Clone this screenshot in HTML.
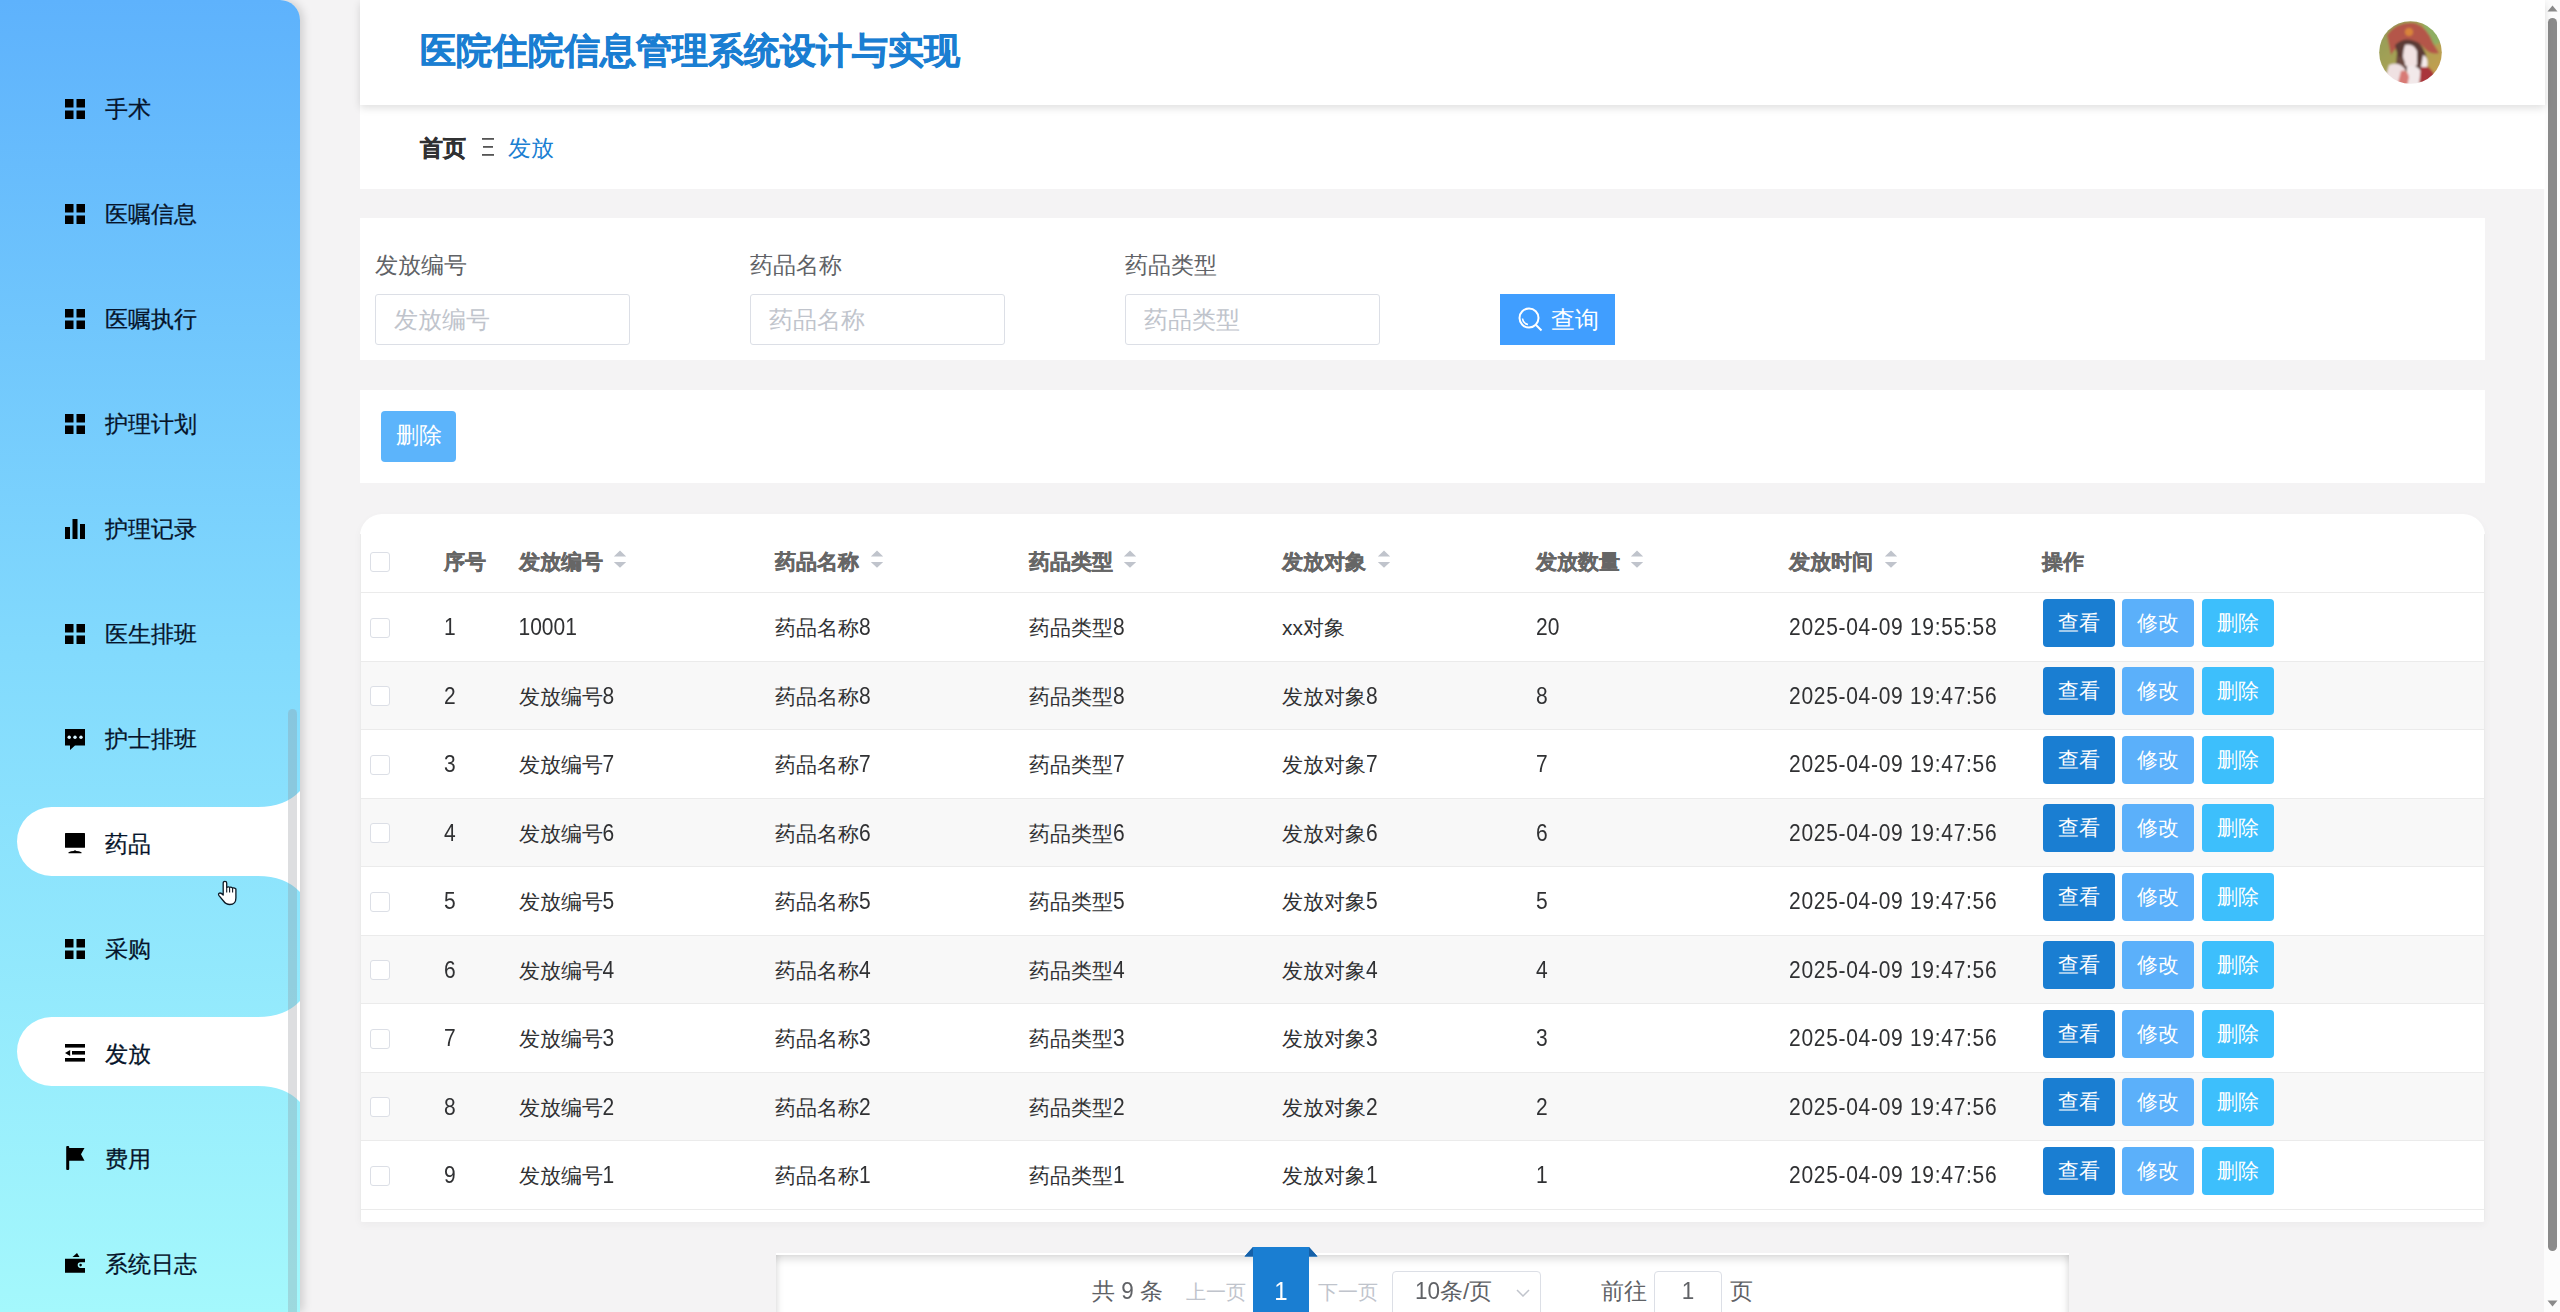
<!DOCTYPE html><html><head><meta charset="utf-8"><style>
*{box-sizing:border-box;margin:0;padding:0}
html,body{width:2560px;height:1312px;overflow:hidden;background:#f4f3f4;font-family:"Liberation Sans",sans-serif}
.t{position:absolute;white-space:nowrap}
#side{position:absolute;left:0;top:0;width:300px;height:1312px;border-top-right-radius:20px;background:linear-gradient(180deg,#5eb2fc 0%,#82dafd 50%,#a4f8fc 100%);box-shadow:3px 0 10px rgba(0,0,0,.16);overflow:hidden;z-index:5}
.mi{position:absolute;left:105px;font-size:22.5px;line-height:30px;color:#06142a;-webkit-text-stroke:0.25px #06142a;white-space:nowrap}
.ic{position:absolute;left:65px;width:20px;height:20px}
#hdr{position:absolute;left:360px;top:0;width:2185px;height:105px;background:#fff;box-shadow:0 3px 8px rgba(0,0,0,.13);z-index:3}
#bc{position:absolute;left:360px;top:105px;width:2185px;height:84px;background:#fff;z-index:2}
.box{position:absolute;left:360px;width:2125px;background:#fff}
.lbl{font-size:22.5px;line-height:30px;color:#606266}
.inp{position:absolute;width:255px;height:51px;border:1.5px solid #dcdfe6;border-radius:3px;background:#fff}
.ph{font-size:24px;line-height:30px;color:#c0c4cc}
.th{font-size:21px;line-height:28px;font-weight:bold;color:#666;-webkit-text-stroke:0.35px #666}
.td{font-size:21px;line-height:28px;color:#303133}
.cb{position:absolute;left:9.5px;width:20px;height:20px;border:1.5px solid #dcdfe6;border-radius:3px;background:#fff}
.btn{position:absolute;width:72px;height:48px;border-radius:4px;color:#fff;font-size:21px;line-height:48px;text-align:center}
.sort{position:absolute;width:14px;height:18px}
</style></head><body>
<div id="side">
<svg class="t" style="left:0;top:790.5px" width="300" height="101" viewBox="0 0 300 101"><path fill="#fff" d="M51.5 16H300V85H51.5A34.5 34.5 0 0 1 51.5 16Z"/><path fill="#fff" d="M258 16Q285 16 300 0V16Z"/><path fill="#fff" d="M258 85Q285 85 300 101V85Z"/></svg>
<svg class="t" style="left:0;top:1000.5px" width="300" height="101" viewBox="0 0 300 101"><path fill="#fff" d="M51.5 16H300V85H51.5A34.5 34.5 0 0 1 51.5 16Z"/><path fill="#fff" d="M258 16Q285 16 300 0V16Z"/><path fill="#fff" d="M258 85Q285 85 300 101V85Z"/></svg>
<svg class="ic" style="top:99px" viewBox="0 0 20 20" overflow="visible" fill="#000"><rect x="0" y="0" width="8.5" height="8.5"/><rect x="11.5" y="0" width="8.5" height="8.5"/><rect x="0" y="11.5" width="8.5" height="8.5"/><rect x="11.5" y="11.5" width="8.5" height="8.5"/></svg>
<div class="mi" style="top:95px">手术</div>
<svg class="ic" style="top:204px" viewBox="0 0 20 20" overflow="visible" fill="#000"><rect x="0" y="0" width="8.5" height="8.5"/><rect x="11.5" y="0" width="8.5" height="8.5"/><rect x="0" y="11.5" width="8.5" height="8.5"/><rect x="11.5" y="11.5" width="8.5" height="8.5"/></svg>
<div class="mi" style="top:200px">医嘱信息</div>
<svg class="ic" style="top:309px" viewBox="0 0 20 20" overflow="visible" fill="#000"><rect x="0" y="0" width="8.5" height="8.5"/><rect x="11.5" y="0" width="8.5" height="8.5"/><rect x="0" y="11.5" width="8.5" height="8.5"/><rect x="11.5" y="11.5" width="8.5" height="8.5"/></svg>
<div class="mi" style="top:305px">医嘱执行</div>
<svg class="ic" style="top:414px" viewBox="0 0 20 20" overflow="visible" fill="#000"><rect x="0" y="0" width="8.5" height="8.5"/><rect x="11.5" y="0" width="8.5" height="8.5"/><rect x="0" y="11.5" width="8.5" height="8.5"/><rect x="11.5" y="11.5" width="8.5" height="8.5"/></svg>
<div class="mi" style="top:410px">护理计划</div>
<svg class="ic" style="top:519px" viewBox="0 0 20 20" overflow="visible" fill="#000"><rect x="0" y="8" width="5" height="12"/><rect x="7.5" y="0" width="5" height="20"/><rect x="15" y="5" width="5" height="15"/></svg>
<div class="mi" style="top:515px">护理记录</div>
<svg class="ic" style="top:624px" viewBox="0 0 20 20" overflow="visible" fill="#000"><rect x="0" y="0" width="8.5" height="8.5"/><rect x="11.5" y="0" width="8.5" height="8.5"/><rect x="0" y="11.5" width="8.5" height="8.5"/><rect x="11.5" y="11.5" width="8.5" height="8.5"/></svg>
<div class="mi" style="top:620px">医生排班</div>
<svg class="ic" style="top:729px" viewBox="0 0 20 20" overflow="visible" fill="#000"><path d="M0 0H20V16.5H10L5 21V16.5H0Z"/><circle cx="4.2" cy="8.3" r="1.7" fill="#d8f4ff"/><circle cx="10" cy="8.3" r="1.7" fill="#d8f4ff"/><circle cx="16" cy="8.3" r="1.7" fill="#d8f4ff"/></svg>
<div class="mi" style="top:725px">护士排班</div>
<svg class="ic" style="top:834px" viewBox="0 0 20 20" overflow="visible" fill="#000"><rect x="0" y="-1" width="20" height="14.8" rx="0.5"/><path d="M3.5 18.2Q6 17 8.6 17Q10 15.6 11.4 17Q14 17 16.5 18.2V19.3H3.5Z"/></svg>
<div class="mi" style="top:830px">药品</div>
<svg class="ic" style="top:939px" viewBox="0 0 20 20" overflow="visible" fill="#000"><rect x="0" y="0" width="8.5" height="8.5"/><rect x="11.5" y="0" width="8.5" height="8.5"/><rect x="0" y="11.5" width="8.5" height="8.5"/><rect x="11.5" y="11.5" width="8.5" height="8.5"/></svg>
<div class="mi" style="top:935px">采购</div>
<svg class="ic" style="top:1044px" viewBox="0 0 20 20" overflow="visible" fill="#000"><rect x="0" y="0" width="20" height="3.6"/><rect x="7" y="7" width="13" height="3.6"/><path d="M0 9L5.2 6V12Z"/><rect x="0" y="14" width="20" height="3.6"/></svg>
<div class="mi" style="top:1040px">发放</div>
<svg class="ic" style="top:1149px" viewBox="0 0 20 20" overflow="visible" fill="#000"><rect x="1.2" y="-3" width="3" height="24" rx="1"/><path d="M4 -1H19.5L16 5.2L19.5 11.7H4Z"/></svg>
<div class="mi" style="top:1145px">费用</div>
<svg class="ic" style="top:1254px" viewBox="0 0 20 20" overflow="visible" fill="#000"><path d="M7.5 3L12 -1L14.5 3Z"/><path d="M0 4.8H20V8.3H15.5A2.8 2.8 0 0 0 15.5 13.9H20V18.7H0Z"/><circle cx="15.6" cy="11.1" r="1.3"/></svg>
<div class="mi" style="top:1250px">系统日志</div>
<div class="t" style="left:288px;top:709px;width:9px;height:640px;border-radius:5px;background:rgba(144,147,153,.3)"></div>
<svg class="t" style="left:215px;top:878px" width="25" height="30" viewBox="0 0 25 30"><path d="M8.2 17V5Q8.2 3.3 9.95 3.3Q11.7 3.3 11.7 5V9.5Q13.1 8.4 14.6 9.3Q16.1 8.7 17.6 9.9Q19.3 9.4 20.9 11V20Q20.9 26.5 14.8 26.5Q11 26.5 8.5 23L3.8 17.3Q3 15.8 4.5 15.1Q6 14.6 8.2 17Z" fill="#fff" stroke="#0d1a26" stroke-width="1.3" stroke-linejoin="round"/><path d="M11.7 9.5V14.5M14.6 9.4V14.5M17.6 10V14.5" stroke="#0d1a26" stroke-width="1.1"/></svg>
</div>
<div id="hdr">
<div class="t" style="left:60px;top:29px;font-size:36px;line-height:44px;font-weight:bold;color:#1a7ed2;-webkit-text-stroke:0.6px #1a7ed2">医院住院信息管理系统设计与实现</div>
<svg class="t" style="left:2019px;top:21px" width="63" height="63" viewBox="0 0 63 63">
<defs><clipPath id="cc"><circle cx="31.5" cy="31.5" r="31.3"/></clipPath>
<filter id="bl" x="-10%" y="-10%" width="120%" height="120%"><feGaussianBlur stdDeviation="1.1"/></filter>
<linearGradient id="ag" x1="0" y1="0" x2="1" y2="1"><stop offset="0" stop-color="#8d9c5c"/><stop offset=".5" stop-color="#a9a253"/><stop offset="1" stop-color="#cf9c4e"/></linearGradient></defs>
<g clip-path="url(#cc)"><g filter="url(#bl)">
<rect x="-3" y="-3" width="69" height="69" fill="url(#ag)"/>
<path d="M44 -2L60 4L64 20L52 26L46 12Z" fill="#8fae62"/>
<path d="M8 14Q18 0 36 2Q48 6 54 22L60 32Q52 34 46 28Q38 18 26 22Q16 26 12 34Z" fill="#b4574a"/>
<circle cx="30" cy="11" r="4" fill="#d9843a"/>
<path d="M16 24Q26 14 40 22Q48 30 48 44Q44 52 36 50L24 50Q16 44 18 32Z" fill="#5b3b36"/>
<path d="M26 24Q34 22 38 30L38 44Q32 50 26 44Q22 36 26 24Z" fill="#f1e2e2"/>
<path d="M18 36Q24 34 26 42L24 50L16 48Z" fill="#6b4a40"/>
<path d="M10 44Q20 40 26 48L30 66H4Z" fill="#efe1e2"/>
<path d="M28 46Q36 42 42 50L40 66H28Z" fill="#f2e9ea"/>
<path d="M22 50Q28 48 30 56L28 66H18Z" fill="#d87a74"/>
<path d="M42 44Q52 44 56 56L52 66H40Z" fill="#a9363a"/>
<path d="M44 34Q50 36 48 46L42 46Z" fill="#f4eaea"/>
</g></g></svg>
</div>
<div id="bc">
<div class="t" style="left:60px;top:28.5px;font-size:22.5px;line-height:30px;font-weight:bold;color:#303133;-webkit-text-stroke:0.4px #303133">首页</div>
<svg class="t" style="left:122px;top:33px" width="12" height="18" viewBox="0 0 12 18"><rect x="0" y="0" width="12" height="1.8" fill="#555"/><rect x="1" y="8" width="10" height="1.8" fill="#555"/><rect x="0" y="16" width="12" height="1.8" fill="#555"/></svg>
<div class="t" style="left:148px;top:28.5px;font-size:22.5px;line-height:30px;color:#1a7ed2">发放</div>
</div>
<div class="box" style="top:218px;height:142px">
<div class="t lbl" style="left:15px;top:33px">发放编号</div>
<div class="inp" style="left:15px;top:76px"><div class="t ph" style="left:17.5px;top:10px">发放编号</div></div>
<div class="t lbl" style="left:390px;top:33px">药品名称</div>
<div class="inp" style="left:390px;top:76px"><div class="t ph" style="left:17.5px;top:10px">药品名称</div></div>
<div class="t lbl" style="left:765px;top:33px">药品类型</div>
<div class="inp" style="left:765px;top:76px"><div class="t ph" style="left:17.5px;top:10px">药品类型</div></div>
<div class="t" style="left:1140px;top:76px;width:115px;height:51px;background:#409eff"><svg class="t" style="left:17px;top:12px" width="28" height="28" viewBox="0 0 28 28"><circle cx="12" cy="12" r="9.5" fill="none" stroke="#fff" stroke-width="2"/><path d="M19 19L24.5 24.5" stroke="#fff" stroke-width="2"/><path d="M5.5 12.5A7 7 0 0 0 11 18.5" fill="none" stroke="#fff" stroke-width="1.5"/></svg><div class="t" style="left:51px;top:11px;font-size:24px;line-height:30px;color:#fff">查询</div></div>
</div>
<div class="box" style="top:390px;height:93px">
<div class="t" style="left:21px;top:21px;width:75px;height:51px;border-radius:4px;background:#5cb4fb;color:#fff;font-size:22.5px;line-height:49px;text-align:center">删除</div>
</div>
<div class="box" style="top:514px;height:708px;border-radius:22px 22px 3px 3px;box-shadow:0 3px 8px rgba(0,0,0,.035)"><div class="t" style="left:0;top:0;width:2125px;height:708px;border-radius:22px 22px 3px 3px;overflow:hidden">
<div class="cb" style="top:37.5px"></div>
<div class="t th" style="left:84px;top:34px">序号</div>
<div class="t th" style="left:158.5px;top:34px">发放编号</div>
<svg class="sort" style="left:253px;top:36px" viewBox="0 0 14 18"><path d="M7 0.5L13.2 6.6H0.8Z M0.8 12.1H13.2L7 17.8Z" fill="#c0c4cc"/></svg>
<div class="t th" style="left:415px;top:34px">药品名称</div>
<svg class="sort" style="left:510px;top:36px" viewBox="0 0 14 18"><path d="M7 0.5L13.2 6.6H0.8Z M0.8 12.1H13.2L7 17.8Z" fill="#c0c4cc"/></svg>
<div class="t th" style="left:669px;top:34px">药品类型</div>
<svg class="sort" style="left:763px;top:36px" viewBox="0 0 14 18"><path d="M7 0.5L13.2 6.6H0.8Z M0.8 12.1H13.2L7 17.8Z" fill="#c0c4cc"/></svg>
<div class="t th" style="left:922px;top:34px">发放对象</div>
<svg class="sort" style="left:1017px;top:36px" viewBox="0 0 14 18"><path d="M7 0.5L13.2 6.6H0.8Z M0.8 12.1H13.2L7 17.8Z" fill="#c0c4cc"/></svg>
<div class="t th" style="left:1176px;top:34px">发放数量</div>
<svg class="sort" style="left:1270px;top:36px" viewBox="0 0 14 18"><path d="M7 0.5L13.2 6.6H0.8Z M0.8 12.1H13.2L7 17.8Z" fill="#c0c4cc"/></svg>
<div class="t th" style="left:1429px;top:34px">发放时间</div>
<svg class="sort" style="left:1524px;top:36px" viewBox="0 0 14 18"><path d="M7 0.5L13.2 6.6H0.8Z M0.8 12.1H13.2L7 17.8Z" fill="#c0c4cc"/></svg>
<div class="t th" style="left:1682px;top:34px">操作</div>
<div class="t" style="left:0;top:78px;width:2125px;height:1px;background:#ebebeb"></div>
<div class="t" style="left:0;top:79px;width:2125px;height:68px;background:#fff"></div>
<div class="cb" style="top:103.5px"></div>
<div class="t td" style="left:84px;top:100.0px"><span style="display:inline-block;transform:scaleY(1.12);transform-origin:0 21.28px">1</span></div>
<div class="t td" style="left:158.5px;top:100.0px"><span style="display:inline-block;transform:scaleY(1.12);transform-origin:0 21.28px">10001</span></div>
<div class="t td" style="left:415px;top:100.0px">药品名称<span style="display:inline-block;transform:scaleY(1.12);transform-origin:0 21.28px">8</span></div>
<div class="t td" style="left:669px;top:100.0px">药品类型<span style="display:inline-block;transform:scaleY(1.12);transform-origin:0 21.28px">8</span></div>
<div class="t td" style="left:922px;top:100.0px">xx对象</div>
<div class="t td" style="left:1176px;top:100.0px"><span style="display:inline-block;transform:scaleY(1.12);transform-origin:0 21.28px">20</span></div>
<div class="t td" style="left:1429px;top:100.0px"><span style="display:inline-block;transform:scaleY(1.12);transform-origin:0 21.28px;letter-spacing:0.7px">2025-04-09 19:55:58</span></div>
<div class="btn" style="left:1683px;top:84.5px;background:#1a7ed2">查看</div>
<div class="btn" style="left:1762px;top:84.5px;background:#5bb0fa">修改</div>
<div class="btn" style="left:1842px;top:84.5px;background:#3dbffc">删除</div>
<div class="t" style="left:0;top:147px;width:2125px;height:1px;background:#ebebeb"></div>
<div class="t" style="left:0;top:148px;width:2125px;height:67px;background:#f8f8f8"></div>
<div class="cb" style="top:172.0px"></div>
<div class="t td" style="left:84px;top:168.5px"><span style="display:inline-block;transform:scaleY(1.12);transform-origin:0 21.28px">2</span></div>
<div class="t td" style="left:158.5px;top:168.5px">发放编号<span style="display:inline-block;transform:scaleY(1.12);transform-origin:0 21.28px">8</span></div>
<div class="t td" style="left:415px;top:168.5px">药品名称<span style="display:inline-block;transform:scaleY(1.12);transform-origin:0 21.28px">8</span></div>
<div class="t td" style="left:669px;top:168.5px">药品类型<span style="display:inline-block;transform:scaleY(1.12);transform-origin:0 21.28px">8</span></div>
<div class="t td" style="left:922px;top:168.5px">发放对象<span style="display:inline-block;transform:scaleY(1.12);transform-origin:0 21.28px">8</span></div>
<div class="t td" style="left:1176px;top:168.5px"><span style="display:inline-block;transform:scaleY(1.12);transform-origin:0 21.28px">8</span></div>
<div class="t td" style="left:1429px;top:168.5px"><span style="display:inline-block;transform:scaleY(1.12);transform-origin:0 21.28px;letter-spacing:0.7px">2025-04-09 19:47:56</span></div>
<div class="btn" style="left:1683px;top:153.0px;background:#1a7ed2">查看</div>
<div class="btn" style="left:1762px;top:153.0px;background:#5bb0fa">修改</div>
<div class="btn" style="left:1842px;top:153.0px;background:#3dbffc">删除</div>
<div class="t" style="left:0;top:215px;width:2125px;height:1px;background:#ebebeb"></div>
<div class="t" style="left:0;top:216px;width:2125px;height:68px;background:#fff"></div>
<div class="cb" style="top:240.5px"></div>
<div class="t td" style="left:84px;top:237.0px"><span style="display:inline-block;transform:scaleY(1.12);transform-origin:0 21.28px">3</span></div>
<div class="t td" style="left:158.5px;top:237.0px">发放编号<span style="display:inline-block;transform:scaleY(1.12);transform-origin:0 21.28px">7</span></div>
<div class="t td" style="left:415px;top:237.0px">药品名称<span style="display:inline-block;transform:scaleY(1.12);transform-origin:0 21.28px">7</span></div>
<div class="t td" style="left:669px;top:237.0px">药品类型<span style="display:inline-block;transform:scaleY(1.12);transform-origin:0 21.28px">7</span></div>
<div class="t td" style="left:922px;top:237.0px">发放对象<span style="display:inline-block;transform:scaleY(1.12);transform-origin:0 21.28px">7</span></div>
<div class="t td" style="left:1176px;top:237.0px"><span style="display:inline-block;transform:scaleY(1.12);transform-origin:0 21.28px">7</span></div>
<div class="t td" style="left:1429px;top:237.0px"><span style="display:inline-block;transform:scaleY(1.12);transform-origin:0 21.28px;letter-spacing:0.7px">2025-04-09 19:47:56</span></div>
<div class="btn" style="left:1683px;top:221.5px;background:#1a7ed2">查看</div>
<div class="btn" style="left:1762px;top:221.5px;background:#5bb0fa">修改</div>
<div class="btn" style="left:1842px;top:221.5px;background:#3dbffc">删除</div>
<div class="t" style="left:0;top:284px;width:2125px;height:1px;background:#ebebeb"></div>
<div class="t" style="left:0;top:285px;width:2125px;height:67px;background:#f8f8f8"></div>
<div class="cb" style="top:309.0px"></div>
<div class="t td" style="left:84px;top:305.5px"><span style="display:inline-block;transform:scaleY(1.12);transform-origin:0 21.28px">4</span></div>
<div class="t td" style="left:158.5px;top:305.5px">发放编号<span style="display:inline-block;transform:scaleY(1.12);transform-origin:0 21.28px">6</span></div>
<div class="t td" style="left:415px;top:305.5px">药品名称<span style="display:inline-block;transform:scaleY(1.12);transform-origin:0 21.28px">6</span></div>
<div class="t td" style="left:669px;top:305.5px">药品类型<span style="display:inline-block;transform:scaleY(1.12);transform-origin:0 21.28px">6</span></div>
<div class="t td" style="left:922px;top:305.5px">发放对象<span style="display:inline-block;transform:scaleY(1.12);transform-origin:0 21.28px">6</span></div>
<div class="t td" style="left:1176px;top:305.5px"><span style="display:inline-block;transform:scaleY(1.12);transform-origin:0 21.28px">6</span></div>
<div class="t td" style="left:1429px;top:305.5px"><span style="display:inline-block;transform:scaleY(1.12);transform-origin:0 21.28px;letter-spacing:0.7px">2025-04-09 19:47:56</span></div>
<div class="btn" style="left:1683px;top:290.0px;background:#1a7ed2">查看</div>
<div class="btn" style="left:1762px;top:290.0px;background:#5bb0fa">修改</div>
<div class="btn" style="left:1842px;top:290.0px;background:#3dbffc">删除</div>
<div class="t" style="left:0;top:352px;width:2125px;height:1px;background:#ebebeb"></div>
<div class="t" style="left:0;top:353px;width:2125px;height:68px;background:#fff"></div>
<div class="cb" style="top:377.5px"></div>
<div class="t td" style="left:84px;top:374.0px"><span style="display:inline-block;transform:scaleY(1.12);transform-origin:0 21.28px">5</span></div>
<div class="t td" style="left:158.5px;top:374.0px">发放编号<span style="display:inline-block;transform:scaleY(1.12);transform-origin:0 21.28px">5</span></div>
<div class="t td" style="left:415px;top:374.0px">药品名称<span style="display:inline-block;transform:scaleY(1.12);transform-origin:0 21.28px">5</span></div>
<div class="t td" style="left:669px;top:374.0px">药品类型<span style="display:inline-block;transform:scaleY(1.12);transform-origin:0 21.28px">5</span></div>
<div class="t td" style="left:922px;top:374.0px">发放对象<span style="display:inline-block;transform:scaleY(1.12);transform-origin:0 21.28px">5</span></div>
<div class="t td" style="left:1176px;top:374.0px"><span style="display:inline-block;transform:scaleY(1.12);transform-origin:0 21.28px">5</span></div>
<div class="t td" style="left:1429px;top:374.0px"><span style="display:inline-block;transform:scaleY(1.12);transform-origin:0 21.28px;letter-spacing:0.7px">2025-04-09 19:47:56</span></div>
<div class="btn" style="left:1683px;top:358.5px;background:#1a7ed2">查看</div>
<div class="btn" style="left:1762px;top:358.5px;background:#5bb0fa">修改</div>
<div class="btn" style="left:1842px;top:358.5px;background:#3dbffc">删除</div>
<div class="t" style="left:0;top:421px;width:2125px;height:1px;background:#ebebeb"></div>
<div class="t" style="left:0;top:422px;width:2125px;height:67px;background:#f8f8f8"></div>
<div class="cb" style="top:446.0px"></div>
<div class="t td" style="left:84px;top:442.5px"><span style="display:inline-block;transform:scaleY(1.12);transform-origin:0 21.28px">6</span></div>
<div class="t td" style="left:158.5px;top:442.5px">发放编号<span style="display:inline-block;transform:scaleY(1.12);transform-origin:0 21.28px">4</span></div>
<div class="t td" style="left:415px;top:442.5px">药品名称<span style="display:inline-block;transform:scaleY(1.12);transform-origin:0 21.28px">4</span></div>
<div class="t td" style="left:669px;top:442.5px">药品类型<span style="display:inline-block;transform:scaleY(1.12);transform-origin:0 21.28px">4</span></div>
<div class="t td" style="left:922px;top:442.5px">发放对象<span style="display:inline-block;transform:scaleY(1.12);transform-origin:0 21.28px">4</span></div>
<div class="t td" style="left:1176px;top:442.5px"><span style="display:inline-block;transform:scaleY(1.12);transform-origin:0 21.28px">4</span></div>
<div class="t td" style="left:1429px;top:442.5px"><span style="display:inline-block;transform:scaleY(1.12);transform-origin:0 21.28px;letter-spacing:0.7px">2025-04-09 19:47:56</span></div>
<div class="btn" style="left:1683px;top:427.0px;background:#1a7ed2">查看</div>
<div class="btn" style="left:1762px;top:427.0px;background:#5bb0fa">修改</div>
<div class="btn" style="left:1842px;top:427.0px;background:#3dbffc">删除</div>
<div class="t" style="left:0;top:489px;width:2125px;height:1px;background:#ebebeb"></div>
<div class="t" style="left:0;top:490px;width:2125px;height:68px;background:#fff"></div>
<div class="cb" style="top:514.5px"></div>
<div class="t td" style="left:84px;top:511.0px"><span style="display:inline-block;transform:scaleY(1.12);transform-origin:0 21.28px">7</span></div>
<div class="t td" style="left:158.5px;top:511.0px">发放编号<span style="display:inline-block;transform:scaleY(1.12);transform-origin:0 21.28px">3</span></div>
<div class="t td" style="left:415px;top:511.0px">药品名称<span style="display:inline-block;transform:scaleY(1.12);transform-origin:0 21.28px">3</span></div>
<div class="t td" style="left:669px;top:511.0px">药品类型<span style="display:inline-block;transform:scaleY(1.12);transform-origin:0 21.28px">3</span></div>
<div class="t td" style="left:922px;top:511.0px">发放对象<span style="display:inline-block;transform:scaleY(1.12);transform-origin:0 21.28px">3</span></div>
<div class="t td" style="left:1176px;top:511.0px"><span style="display:inline-block;transform:scaleY(1.12);transform-origin:0 21.28px">3</span></div>
<div class="t td" style="left:1429px;top:511.0px"><span style="display:inline-block;transform:scaleY(1.12);transform-origin:0 21.28px;letter-spacing:0.7px">2025-04-09 19:47:56</span></div>
<div class="btn" style="left:1683px;top:495.5px;background:#1a7ed2">查看</div>
<div class="btn" style="left:1762px;top:495.5px;background:#5bb0fa">修改</div>
<div class="btn" style="left:1842px;top:495.5px;background:#3dbffc">删除</div>
<div class="t" style="left:0;top:558px;width:2125px;height:1px;background:#ebebeb"></div>
<div class="t" style="left:0;top:559px;width:2125px;height:67px;background:#f8f8f8"></div>
<div class="cb" style="top:583.0px"></div>
<div class="t td" style="left:84px;top:579.5px"><span style="display:inline-block;transform:scaleY(1.12);transform-origin:0 21.28px">8</span></div>
<div class="t td" style="left:158.5px;top:579.5px">发放编号<span style="display:inline-block;transform:scaleY(1.12);transform-origin:0 21.28px">2</span></div>
<div class="t td" style="left:415px;top:579.5px">药品名称<span style="display:inline-block;transform:scaleY(1.12);transform-origin:0 21.28px">2</span></div>
<div class="t td" style="left:669px;top:579.5px">药品类型<span style="display:inline-block;transform:scaleY(1.12);transform-origin:0 21.28px">2</span></div>
<div class="t td" style="left:922px;top:579.5px">发放对象<span style="display:inline-block;transform:scaleY(1.12);transform-origin:0 21.28px">2</span></div>
<div class="t td" style="left:1176px;top:579.5px"><span style="display:inline-block;transform:scaleY(1.12);transform-origin:0 21.28px">2</span></div>
<div class="t td" style="left:1429px;top:579.5px"><span style="display:inline-block;transform:scaleY(1.12);transform-origin:0 21.28px;letter-spacing:0.7px">2025-04-09 19:47:56</span></div>
<div class="btn" style="left:1683px;top:564.0px;background:#1a7ed2">查看</div>
<div class="btn" style="left:1762px;top:564.0px;background:#5bb0fa">修改</div>
<div class="btn" style="left:1842px;top:564.0px;background:#3dbffc">删除</div>
<div class="t" style="left:0;top:626px;width:2125px;height:1px;background:#ebebeb"></div>
<div class="t" style="left:0;top:627px;width:2125px;height:68px;background:#fff"></div>
<div class="cb" style="top:651.5px"></div>
<div class="t td" style="left:84px;top:648.0px"><span style="display:inline-block;transform:scaleY(1.12);transform-origin:0 21.28px">9</span></div>
<div class="t td" style="left:158.5px;top:648.0px">发放编号<span style="display:inline-block;transform:scaleY(1.12);transform-origin:0 21.28px">1</span></div>
<div class="t td" style="left:415px;top:648.0px">药品名称<span style="display:inline-block;transform:scaleY(1.12);transform-origin:0 21.28px">1</span></div>
<div class="t td" style="left:669px;top:648.0px">药品类型<span style="display:inline-block;transform:scaleY(1.12);transform-origin:0 21.28px">1</span></div>
<div class="t td" style="left:922px;top:648.0px">发放对象<span style="display:inline-block;transform:scaleY(1.12);transform-origin:0 21.28px">1</span></div>
<div class="t td" style="left:1176px;top:648.0px"><span style="display:inline-block;transform:scaleY(1.12);transform-origin:0 21.28px">1</span></div>
<div class="t td" style="left:1429px;top:648.0px"><span style="display:inline-block;transform:scaleY(1.12);transform-origin:0 21.28px;letter-spacing:0.7px">2025-04-09 19:47:56</span></div>
<div class="btn" style="left:1683px;top:632.5px;background:#1a7ed2">查看</div>
<div class="btn" style="left:1762px;top:632.5px;background:#5bb0fa">修改</div>
<div class="btn" style="left:1842px;top:632.5px;background:#3dbffc">删除</div>
<div class="t" style="left:0;top:695px;width:2125px;height:1px;background:#ebebeb"></div>
<div class="t" style="left:0;top:20px;width:1px;height:688px;background:#ebebeb"></div>
<div class="t" style="left:2124px;top:20px;width:1px;height:688px;background:#ebebeb"></div>
</div></div>
<div class="t" style="left:776px;top:1253px;width:1293px;height:1.5px;background:#fff"></div>
<div class="t" style="left:776px;top:1255px;width:1293px;height:80px;background:#fff;box-shadow:inset 0 8px 8px -4px rgba(0,0,0,.14),inset 6px 0 6px -4px rgba(0,0,0,.1),inset -6px 0 6px -4px rgba(0,0,0,.1)">
<div class="t" style="left:316px;top:22px;font-size:22.5px;line-height:30px;color:#606266">共 <span style="display:inline-block;transform:scaleY(1.1);transform-origin:0 22.80px">9</span> 条</div>
<div class="t" style="left:410px;top:22px;font-size:20px;line-height:30px;color:#c0c4cc">上一页</div>
<div class="t" style="left:542px;top:22px;font-size:20px;line-height:30px;color:#c0c4cc">下一页</div>
<div class="t" style="left:616px;top:16px;width:149px;height:60px;border:1.5px solid #dcdfe6;border-radius:4px"></div>
<div class="t" style="left:639px;top:22px;font-size:22.5px;line-height:30px;color:#606266"><span style="display:inline-block;transform:scaleY(1.1);transform-origin:0 22.80px">10</span>条/页</div>
<svg class="t" style="left:740px;top:34px" width="14" height="8" viewBox="0 0 14 8"><path d="M1 1L7 7L13 1" fill="none" stroke="#c0c4cc" stroke-width="1.5"/></svg>
<div class="t" style="left:825px;top:22px;font-size:22.5px;line-height:30px;color:#606266">前往</div>
<div class="t" style="left:878px;top:16px;width:68px;height:60px;border:1.5px solid #dcdfe6;border-radius:4px"></div>
<div class="t" style="left:878px;top:22px;width:68px;text-align:center;font-size:22.5px;line-height:30px;color:#606266"><span style="display:inline-block;transform:scaleY(1.1);transform-origin:0 22.80px">1</span></div>
<div class="t" style="left:954px;top:22px;font-size:22.5px;line-height:30px;color:#606266">页</div>
</div>
<svg class="t" style="left:1244px;top:1247px;z-index:4" width="74" height="65" viewBox="0 0 74 65"><path d="M9 0H65L73.5 9.5H65V65H9V9.5H0.5Z" fill="#1a7ed2"/><path d="M9 0L0.5 9.5H9Z M65 0L73.5 9.5H65Z" fill="#1560a8"/></svg>
<div class="t" style="left:1253px;top:1277px;width:56px;text-align:center;font-size:24px;line-height:30px;color:#fff;z-index:5"><span style="display:inline-block;transform:scaleY(1.08);transform-origin:0 23.32px">1</span></div>
<div class="t" style="left:2544px;top:0;width:16px;height:1312px;background:#fcfcfc"></div>
<div class="t" style="left:2548px;top:18px;width:9px;height:1233px;border-radius:5px;background:#8a8a8a"></div>
<svg class="t" style="left:2547px;top:5px" width="11" height="7" viewBox="0 0 11 7"><path d="M5.5 0.5L10.5 6.5H0.5Z" fill="#8a8a8a"/></svg>
<svg class="t" style="left:2547px;top:1300px" width="11" height="7" viewBox="0 0 11 7"><path d="M0.5 0.5H10.5L5.5 6.5Z" fill="#8a8a8a"/></svg>
</body></html>
